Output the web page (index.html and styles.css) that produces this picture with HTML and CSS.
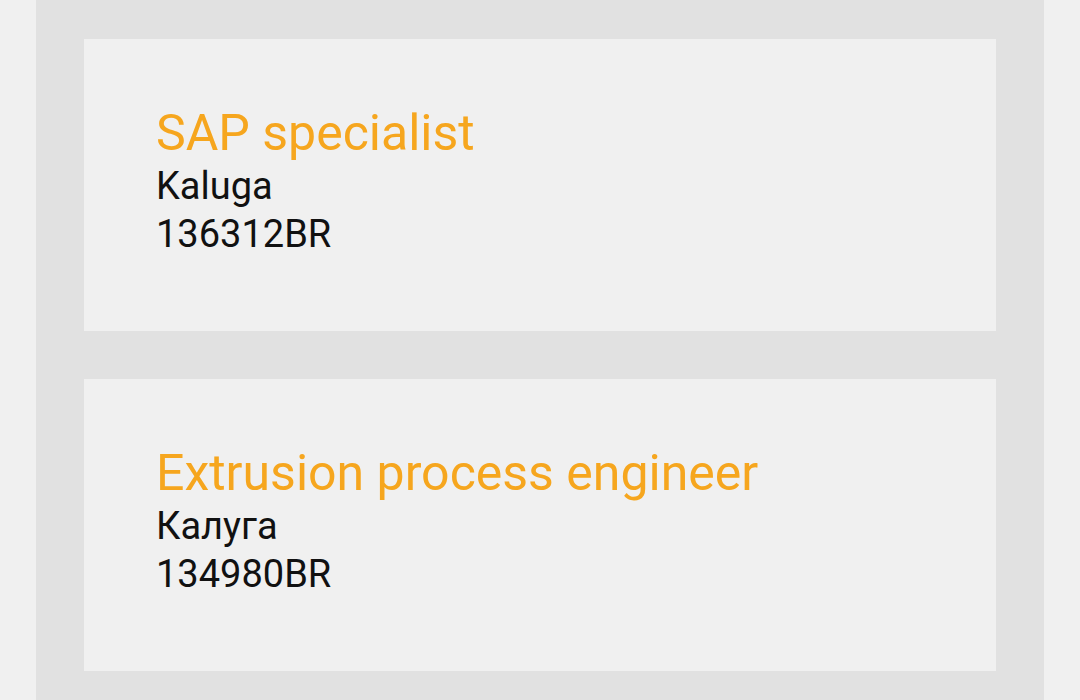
FILE: index.html
```html
<!DOCTYPE html>
<html>
<head>
  <meta charset="utf-8">
  <title>Vacancies</title>
  <meta name="viewport" content="width=device-width, initial-scale=1">
  <link rel="stylesheet" href="styles.css">
</head>
<body>
  <main class="panel">
    <section class="job">
      <h2 class="job-title">SAP specialist</h2>
      <p class="job-city">Kaluga</p>
      <p class="job-ref">136312BR</p>
    </section>
    <section class="job">
      <h2 class="job-title">Extrusion process engineer</h2>
      <p class="job-city">Калуга</p>
      <p class="job-ref">134980BR</p>
    </section>
  </main>
</body>
</html>
```

FILE: styles.css
```css
html, body {
  margin: 0;
  height: 100%;
}
body {
  background-color: #f0f0f0;
  font-family: Roboto, "Noto Sans", sans-serif;
  overflow: hidden;
}
.panel {
  margin: 0 36px;
  padding: 39px 48px;
  background-color: #e1e1e1;
  min-height: 100%;
  box-sizing: border-box;
  display: flex;
  flex-direction: column;
  gap: 48px;
}
.job {
  background-color: #f0f0f0;
  height: 292px;
  box-sizing: border-box;
  padding: 65px 72px 0;
}
.job-title {
  margin: 0;
  font-size: 50px;
  font-weight: 400;
  line-height: 58px;
  color: #f6a61e;
}
.job-city,
.job-ref {
  margin: 0;
  font-size: 38px;
  line-height: 48px;
  color: #111;
}
```
